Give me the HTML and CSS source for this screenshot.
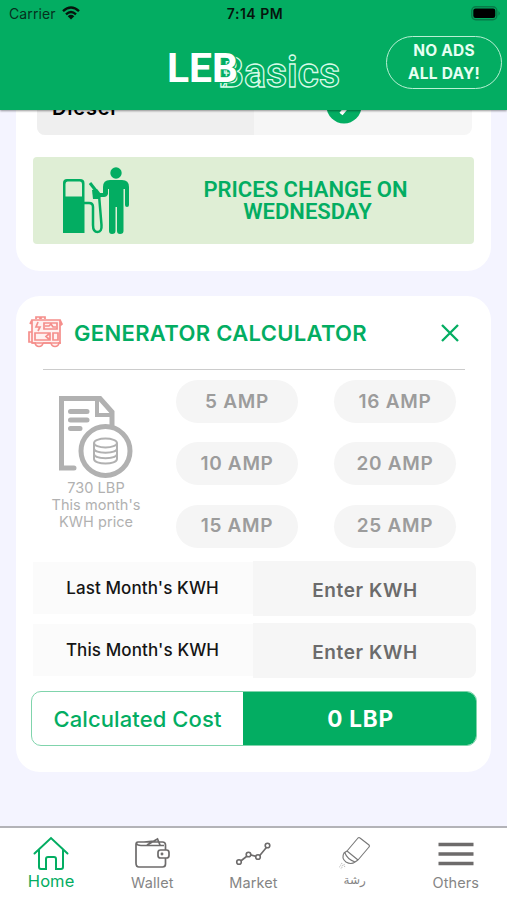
FILE: index.html
```html
<!DOCTYPE html>
<html lang="en">
<head>
<meta charset="utf-8">
<title>LEBasics</title>
<link rel="stylesheet" href="styles.css">
</head>
<body>
<header class="header">
  <div class="status">
    <div class="status-left"><span>Carrier</span>
      <svg class="wifi" viewBox="0 0 18 14"><path d="M1 5.200Q9-2 17 5.200M4 8.300Q9 3.800 14 8.300" fill="none" stroke="#06150d" stroke-width="2.400"/><path d="M5.700 10.200Q9 7.500 12.300 10.200L9 13.600Z" fill="#06150d"/></svg>
    </div>
    <span class="time">7:14 PM</span>
    <svg class="battery" viewBox="0 0 30 16"><rect x=".8" y=".8" width="25" height="13" rx="4" fill="none" stroke="#087a48" stroke-width="1.400"/><rect x="2.300" y="2.600" width="22" height="9.400" rx="2.200" fill="#000"/><path d="M27.500 5Q30 7.400 27.500 9.800Z" fill="#087a48"/></svg>
  </div>
  <div class="brand-row">
    <svg class="logo" viewBox="0 0 176 44">
      <text class="logo-outline" x="50" y="37.500" textLength="122" lengthAdjust="spacingAndGlyphs">Basics</text>
      <text class="logo-solid" x="-1" y="33" textLength="71" lengthAdjust="spacingAndGlyphs">LEB</text>
    </svg>
    <button class="no-ads">NO ADS<br>ALL DAY!</button>
  </div>
</header>

<main class="content">
  <section class="card fuel-card">
    <div class="fuel-row">
      <div class="fuel-name">Diesel</div>
      <div class="fuel-action"><svg class="go" viewBox="0 0 36 36"><circle cx="18" cy="18" r="17.500" fill="#03ad62"/><path d="M15 9L22.500 17L15 26" fill="none" stroke="#fff" stroke-width="4"/></svg></div>
    </div>
    <div class="banner">
      <svg class="pump" viewBox="0 0 68 68">
        <path fill="#03ad62" fill-rule="evenodd" d="M1 16Q1 12 5 12H18Q22.500 12 22.500 16V66H1ZM3.500 17V29.500H20V17Q20 14.500 18 14.500H5.500Q3.500 14.500 3.500 17Z"/>
        <path d="M22 36H27Q31 36 31 40V58Q31 65 35.500 65Q40 65 39.500 58L37 28" fill="none" stroke="#03ad62" stroke-width="2.500"/>
        <path d="M28 16L35 25" stroke="#03ad62" stroke-width="3"/><path d="M30 23L35 22L39 27L38 32H31Z" fill="#03ad62"/>
        <circle cx="54" cy="6" r="5.700" fill="#03ad62"/>
        <path fill="#03ad62" d="M48 13H60Q67 13 67 20V38Q67 40 65 40Q63 40 63 38V22H61.500V64Q61.500 67 58 67Q55 67 55 64V40H53.500V64Q53.500 67 50 67Q47 67 47 64V22H46V27Q45 30 42 30H33V26H41V20Q41 13 48 13Z"/>
      </svg>
      <p>PRICES CHANGE ON<br><span>WEDNESDAY</span></p>
    </div>
  </section>

  <section class="card calc-card">
    <div class="calc-head">
      <svg class="generator" viewBox="0 0 36 32" fill="#fff1f0" stroke="#f58e8b" stroke-width="1.700">
        <circle cx="11" cy="26.500" r="4"/><circle cx="27" cy="26.500" r="4"/>
        <path d="M4 4H32V27H4ZM2 8L4 4M32 4L34 8L33 9H32M1 16H4V26H1ZM7 17H22V24H7ZM22 17L18 20.500L22 24"/>
        <path d="M8 3V1H12V3M13 3V1H17V3M10 6L8 11H12L10 15M16 7H29V13H16ZM17 10H21L23 8L25 11H28M25 17H30V24H25ZM4 27H8M15 27H23M30 27H33"/>
      </svg>
      <h2>GENERATOR CALCULATOR</h2>
      <svg class="close" viewBox="0 0 20 20"><path d="M2 2L18 18M18 2L2 18" stroke="#03ad62" stroke-width="2.300"/></svg>
    </div>
    <div class="calc-options">
      <div class="rate">
        <svg viewBox="0 0 76 84" fill="none" stroke="#b1b1b1" stroke-width="5">
          <path d="M16 73H3.500V3.500H42L54 17V32" stroke-linecap="round"/>
          <path d="M39 4V20H54" stroke-width="4"/>
          <path d="M12.500 16.500H29M12.500 25H29M12.500 33.500H22" stroke-linecap="round"/>
          <circle cx="47.500" cy="56" r="24.500" fill="#fff" stroke-width="5"/>
          <g stroke-width="2"><ellipse cx="47.500" cy="48" rx="11.500" ry="4.500"/><path d="M36 48V64C36 70 59 70 59 64V48M36 53.500C36 59 59 59 59 53.500M36 59C36 64.500 59 64.500 59 59"/></g>
        </svg>
        <p>730 LBP<br>This month's<br>KWH price</p>
      </div>
      <div class="amps">
        <button>5 AMP</button><button>16 AMP</button>
        <button>10 AMP</button><button>20 AMP</button>
        <button>15 AMP</button><button>25 AMP</button>
      </div>
    </div>
    <div class="field"><label for="last">Last Month's KWH</label><input id="last" placeholder="Enter KWH"></div>
    <div class="field"><label for="this">This Month's KWH</label><input id="this" placeholder="Enter KWH"></div>
    <div class="cost"><span class="cost-label">Calculated Cost</span><strong>0 LBP</strong></div>
  </section>
</main>

<nav class="tabs">
  <a class="tab active"><svg viewBox="0 0 36 36" fill="none" stroke="#03ad62" stroke-width="2"><path d="M1.500 17.500L18 2L34.500 17.500M6 14V31Q6 33 8 33H13V23Q13 21 15 21H21Q23 21 23 23V33H28Q30 33 30 31V14" stroke-linecap="round"/></svg><span>Home</span></a>
  <a class="tab"><svg viewBox="0 0 36 36" fill="none" stroke="#6d6b6b" stroke-width="1.700"><path d="M31.500 14V9Q31.500 6 28.500 6H4Q2 6 2 8.500V27Q2 31 5 31H28.500Q31.500 31 31.500 28V22M2 7Q3 9.500 7 9.500H30M13 9L23.500 3L26 9M10 6L20 5"/><rect x="24" y="14" width="11" height="8" rx="2.500"/><circle cx="28" cy="18" r=".6"/></svg><span>Wallet</span></a>
  <a class="tab"><svg viewBox="0 0 36 36" fill="#fff" stroke="#6d6b6b" stroke-width="1.600"><path d="M4.500 26L14 18.500L23.500 21L33 9.500" fill="none"/><circle cx="4" cy="26" r="2.300"/><circle cx="13.500" cy="18.500" r="2.300"/><circle cx="23" cy="21" r="2.300"/><circle cx="32.500" cy="9.500" r="2.300"/></svg><span>Market</span></a>
  <a class="tab spray"><svg viewBox="0 0 36 36" fill="none" stroke="#777" stroke-width="1.100"><path d="M10 15L21 2Q22 1 23 2L32 9Q33 10 32 11L21 24M10 15L21 24M10 15L7 17Q4 22 9 26Q14 29 18 26L21 24M8 17Q10 23 18 26"/><path d="M5 27L2 32M6 29L4 33M7 28L8 32" stroke="#bbb" stroke-dasharray="1 1"/></svg><span lang="ar">رشة</span></a>
  <a class="tab"><svg viewBox="0 0 36 36" stroke="#6d6b6b" stroke-width="3.600"><path d="M.5 8.500H35.500M.5 18H35.500M.5 27.500H35.500"/></svg><span>Others</span></a>
</nav>
</body>
</html>
```
FILE: styles.css
```css
* { box-sizing: border-box; }
body {
  margin: 0;
  width: 507px;
  height: 900px;
  display: flex;
  flex-direction: column;
  overflow: hidden;
  background: #f4f4ff;
  font-family: Inter, "Liberation Sans", sans-serif;
}
button, input { font-family: inherit; border: 0; padding: 0; }
p, h2 { margin: 0; }
svg { display: block; flex: none; }

.header { height: 110px; flex: none; background: #03ad62; box-shadow: 0 1px 2px #0006; position: relative; z-index: 1; }
.status { height: 27px; display: grid; grid-template-columns: 1fr auto 1fr; align-items: center; padding: 0 6px 0 9px; font-size: 14px; color: #06301d; }
.status-left { display: flex; align-items: center; gap: 6px; letter-spacing: 0.1px; }
.wifi { width: 18px; height: 14px; margin-top: -2px; }
.time { font-weight: 600; color: #06150d; letter-spacing: 0.5px; }
.battery { width: 30px; height: 16px; justify-self: end; }
.brand-row { display: flex; align-items: flex-start; padding: 9px 5px 0 168px; }
.logo { width: 176px; height: 44px; margin-top: 13px; overflow: visible; }
.logo text { font-family: Roboto, sans-serif; }
.logo-solid { font-size: 41px; font-weight: 700; fill: #fff; stroke: #03ad62; stroke-width: 2px; paint-order: stroke; }
.logo-outline { font-size: 42px; font-weight: 600; fill: none; stroke: #d9fbe9; stroke-width: 1.300px; }
.no-ads { width: 116px; height: 53px; margin-left: auto; border: 1.500px solid #b9f0d4; border-radius: 27px; background: none; color: #e7fff3; font-size: 15.500px; font-weight: 700; letter-spacing: 0.2px; line-height: 23px; padding-bottom: 1px; }

.content { height: 716px; flex: none; overflow: hidden; padding: 0 16px; }
.card { background: #fff; width: 475px; display: flow-root; }
.fuel-card { height: 161px; border-radius: 0 0 24px 24px; padding: 0 17px; }
.fuel-row { display: flex; height: 56px; margin: -31px 2px 0 4px; border-radius: 8px; overflow: hidden; background: #f6f6f6; }
.fuel-name { width: 217px; padding: 17px 0 0 15px; background: #efefef; font-size: 20px; line-height: 24px; font-weight: 600; letter-spacing: 0.8px; }
.fuel-action { flex: 1; display: flex; justify-content: center; padding: 9px 39px 0 0; }
.go { width: 36px; height: 36px; }
.banner { margin-top: 22px; height: 87px; width: 441px; border-radius: 4px; background: #dfeed5; display: flex; align-items: center; padding-left: 29px; }
.pump { width: 68px; height: 68px; margin-top: 1px; }
.banner p { flex: 1; padding-right: 66px; margin-left: 73px; white-space: nowrap; text-align: center; font: 600 22px/22px Roboto, sans-serif; color: #03ad62; }
.banner span { padding-left: 4px; }

.calc-card { height: 476px; margin-top: 25px; border-radius: 24px; padding: 0 15px; }
.calc-head { height: 74px; margin: 0 11px 0 12px; border-bottom: 1px solid #ccc; display: flex; align-items: center; }
.generator { width: 36px; height: 32px; margin-left: -15px; margin-top: -1px; }
.calc-head h2 { margin-left: 10px; color: #03ad62; font-size: 22px; font-weight: 600; letter-spacing: 0.330px; white-space: nowrap; }
.close { width: 20px; height: 20px; margin-left: auto; margin-right: 5px; }
.calc-options { display: flex; height: 187px; }
.rate { width: 130px; padding-top: 23px; display: flex; flex-direction: column; align-items: center; color: #b1b1b1; text-align: center; font-size: 14.500px; line-height: 17px; letter-spacing: 0.050px; }
.rate svg { width: 76px; height: 84px; margin-top: 2px; }
.amps { display: grid; grid-template-columns: 122px 122px; grid-auto-rows: 43px; column-gap: 36px; row-gap: 19.250px; padding: 10px 0 0 15px; }
.amps button { border-radius: 22px; background: #f5f5f5; color: #9c9c9c; font-size: 19px; font-weight: 600; letter-spacing: 0.700px; padding-bottom: 1px; }

.field { display: flex; height: 55px; margin: 4px 0 7px 2px; }
.field + .field { margin: 7px 0 0 2px; }
.field label { width: 221px; height: 52px; margin-top: 1px; padding-right: 1px; background: #fbfbfb; display: flex; align-items: center; justify-content: center; font-size: 17px; font-weight: 500; letter-spacing: 0.100px; color: #151515; }
.field input { width: 223px; background: #f6f6f6; border-radius: 0 8px 8px 0; text-align: center; font-size: 19px; font-weight: 600; letter-spacing: 0.600px; padding: 4px 0 0 1px; }
.field input::placeholder { color: #6b6b6b; opacity: 1; }
.cost { display: flex; width: 446px; height: 55px; margin-top: 13px; border: 1px solid #80d4ac; border-radius: 10px; overflow: hidden; color: #03ad62; }
.cost-label { width: 211px; display: flex; align-items: center; justify-content: center; font-size: 22px; font-weight: 500; letter-spacing: 0.100px; }
.cost strong { flex: 1; display: flex; align-items: center; justify-content: center; background: #03ad62; color: #fff; font-size: 22.500px; font-weight: 700; letter-spacing: 0.800px; padding-left: 2px; }

.tabs { height: 74px; flex: none; display: grid; grid-template-columns: repeat(5, 101.200px); background: #fff; border-top: 2px solid #b3b3b8; }
.tab { display: flex; flex-direction: column; align-items: center; padding: 8px 0 0 1px; color: #858585; font-size: 14.500px; line-height: 22px; letter-spacing: 0.100px; }
.tab svg { width: 36px; height: 36px; }
.active { color: #03ad62; font-size: 16.500px; }
.active span { margin-top: -2px; }
.spray span { font-family: "DejaVu Sans", sans-serif; font-size: 12px; margin-top: -3px; }
```
